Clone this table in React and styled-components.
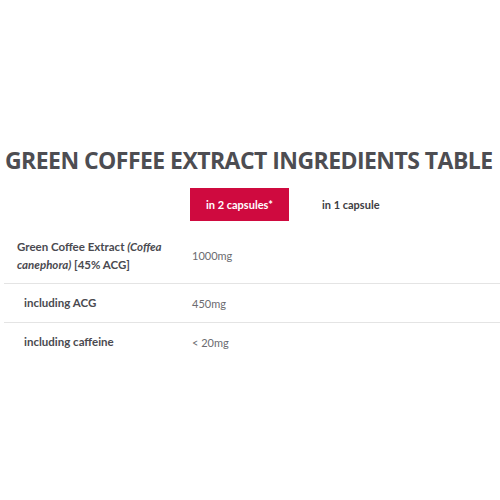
import React from "react";
import styled, { createGlobalStyle } from "styled-components";

const Global = createGlobalStyle`
  html, body { margin: 0; padding: 0; background: #fff; }
  body { font-family: "Lato", "Open Sans", sans-serif; }
`;

const Page = styled.div`
  width: 500px;
  height: 500px;
  padding-top: 146px;
  box-sizing: border-box;
  overflow: hidden;
`;

const Title = styled.h2`
  margin: 0;
  padding-left: 5px;
  font-family: "Open Sans", sans-serif;
  font-weight: 700;
  font-size: 23px;
  letter-spacing: -0.55px;
  line-height: 28px;
  color: #4d4d52;
  white-space: nowrap;
`;

const Tabs = styled.div`
  display: flex;
  align-items: center;
  margin: 14px 0 0 190px;
`;

const Tab = styled.div`
  width: ${(p) => (p.$active ? "99px" : "auto")};
  height: 33px;
  display: flex;
  align-items: center;
  justify-content: center;
  padding: ${(p) => (p.$active ? "0" : "0 0 0 33px")};
  font-size: 11px;
  font-weight: 700;
  background: ${(p) => (p.$active ? "#cf0a3f" : "transparent")};
  color: ${(p) => (p.$active ? "#fff" : "#3d3d42")};
`;

const Table = styled.div`
  margin: 7px 0 0 4px;
`;

const Row = styled.div`
  display: grid;
  grid-template-columns: 188px 1fr;
  align-items: center;
  height: ${(p) => p.$h}px;
  border-top: ${(p) => (p.$first ? "none" : "1px solid #e4e4e4")};
  box-sizing: border-box;
`;

const Label = styled.div`
  padding-left: ${(p) => (p.$indent ? 20 : 13)}px;
  font-size: 11.5px;
  font-weight: 700;
  line-height: 18px;
  color: #4a4a50;
  em { font-style: italic; }
`;

const Value = styled.div`
  font-size: 11px;
  color: #6b6b70;
`;

export default function App() {
  return (
    <Page>
      <Global />
      <Title>GREEN COFFEE EXTRACT INGREDIENTS TABLE</Title>
      <Tabs>
        <Tab $active>in 2 capsules*</Tab>
        <Tab>in 1 capsule</Tab>
      </Tabs>
      <Table>
        <Row $first $h={55}>
          <Label>
            Green Coffee Extract <em>(Coffea<br />canephora)</em> [45% ACG]
          </Label>
          <Value>1000mg</Value>
        </Row>
        <Row $h={39}>
          <Label $indent>including ACG</Label>
          <Value>450mg</Value>
        </Row>
        <Row $h={39}>
          <Label $indent>including caffeine</Label>
          <Value>&lt; 20mg</Value>
        </Row>
      </Table>
    </Page>
  );
}
